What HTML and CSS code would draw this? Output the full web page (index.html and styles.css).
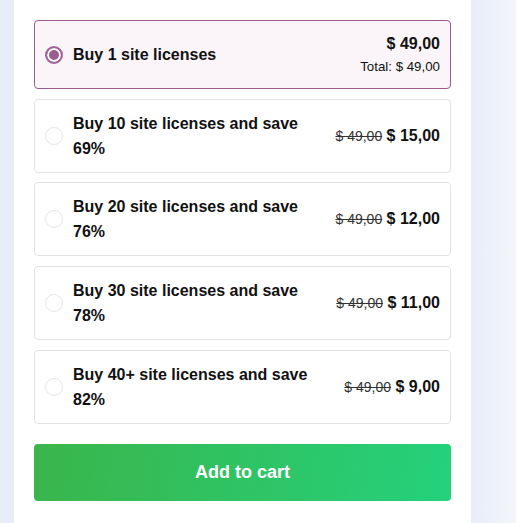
FILE: index.html
```html
<!DOCTYPE html>
<html lang="en">
<head>
    <meta charset="UTF-8">
    <meta name="viewport" content="width=device-width, initial-scale=1.0">
    <title>Site licenses</title>
    <link rel="stylesheet" href="styles.css">
</head>
<body>

<div class="panel">
    <form class="licenses">
        <label class="option selected">
            <input type="radio" name="license" value="1" checked>
            <span class="radio"></span>
            <span class="title">Buy 1 site licenses</span>
            <span class="price">
                <span class="amount">$ 49,00</span>
                <span class="total">Total: $ 49,00</span>
            </span>
        </label>
        <label class="option">
            <input type="radio" name="license" value="10">
            <span class="radio"></span>
            <span class="title">Buy 10 site licenses and save 69%</span>
            <span class="price"><span class="amount"><del>$ 49,00</del> $ 15,00</span></span>
        </label>
        <label class="option">
            <input type="radio" name="license" value="20">
            <span class="radio"></span>
            <span class="title">Buy 20 site licenses and save 76%</span>
            <span class="price"><span class="amount"><del>$ 49,00</del> $ 12,00</span></span>
        </label>
        <label class="option">
            <input type="radio" name="license" value="30">
            <span class="radio"></span>
            <span class="title">Buy 30 site licenses and save 78%</span>
            <span class="price"><span class="amount"><del>$ 49,00</del> $ 11,00</span></span>
        </label>
        <label class="option">
            <input type="radio" name="license" value="40">
            <span class="radio"></span>
            <span class="title">Buy 40+ site licenses and save 82%</span>
            <span class="price"><span class="amount"><del>$ 49,00</del> $ 9,00</span></span>
        </label>
        <button type="button" class="add-to-cart">Add to cart</button>
    </form>
</div>

<script>
    // Move the highlight to whichever option is picked
    document.querySelectorAll('.option input').forEach(function (input) {
        input.addEventListener('change', function () {
            document.querySelectorAll('.option').forEach(function (o) {
                o.classList.remove('selected');
            });
            input.parentNode.classList.add('selected');
        });
    });
</script>

</body>
</html>
```

FILE: styles.css
```css
body {
    font-family: "Liberation Sans", Arial, sans-serif;
    margin: 0;
    height: 523px;
    overflow: hidden;
    background: linear-gradient(90deg, #e8edf8 0, #e8edf8 471px, #f4f5f9 516px);
}
.panel {
    width: 457px;
    height: 100%;
    margin-left: 14px;
    background: #fff;
    box-sizing: border-box;
    padding: 20px;
}
.licenses {
    display: flex;
    flex-direction: column;
    gap: 9.67px;
}
.option {
    display: flex;
    align-items: center;
    gap: 10px;
    padding: 11px 10px;
    border: 1px solid #e2e2e2;
    border-radius: 4px;
    background: #fff;
    cursor: pointer;
    color: #111;
}
.option.selected {
    border-color: #9b5c8f;
    background: #fbf5fa;
}
.option input {
    display: none;
}
.radio {
    flex: none;
    width: 18px;
    height: 18px;
    box-sizing: border-box;
    border: 1px solid #e6e6e6;
    border-radius: 50%;
    background: #fff;
}
.option.selected .radio {
    border: 2px solid #a0659a;
    background: #9b5c8f;
    box-shadow: inset 0 0 0 2px #fff;
}
.title {
    flex: 1;
    font-size: 16px;
    font-weight: bold;
    line-height: 25px;
}
.price {
    display: flex;
    flex-direction: column;
    align-items: flex-end;
    white-space: nowrap;
}
.amount {
    font-size: 16px;
    font-weight: bold;
    line-height: 23px;
}
.amount del {
    font-size: 14px;
    font-weight: normal;
    color: #333;
}
.total {
    font-size: 13.3px;
    line-height: 20px;
    margin-top: 2px;
}
.add-to-cart {
    margin-top: 10.67px;
    height: 57px;
    border: none;
    border-radius: 4px;
    background: linear-gradient(100deg, #3ab54b, #24d17c);
    color: #fff;
    font-family: inherit;
    font-size: 18px;
    font-weight: bold;
    cursor: pointer;
}
```
